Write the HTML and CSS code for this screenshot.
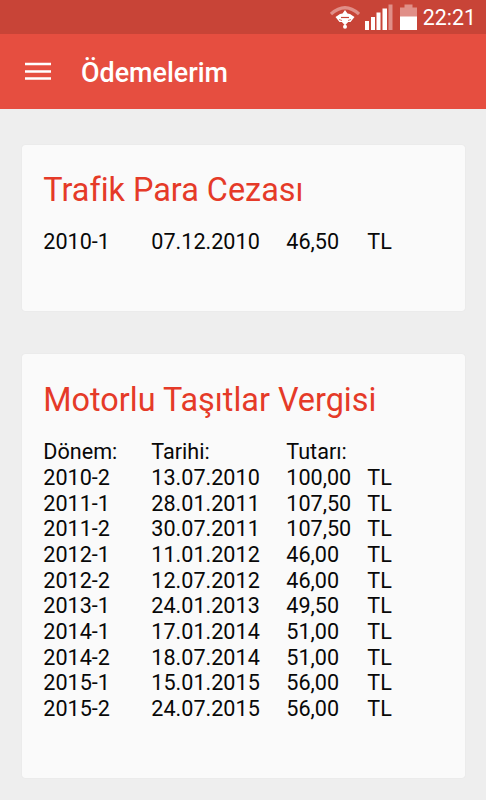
FILE: index.html
```html
<!DOCTYPE html>
<html lang="tr">
<head>
    <meta charset="UTF-8">
    <meta name="viewport" content="width=device-width, initial-scale=1.0">
    <title>Ödemelerim</title>
    <link rel="stylesheet" href="styles.css">
</head>

<body>
    <div class="status-bar">
        <svg class="wifi" width="30" height="24" viewBox="0 0 30 24">
            <path d="M1 8Q15-4.500 29 8" fill="none" stroke="#e08f88" stroke-width="3.200"/>
            <path d="M5.500 11L10 8L12.500 7.500L15 4L17.500 7.500L20 8L24.500 11L20.500 16H9.500Z" fill="#fff"/>
            <path d="M11 11.500H19" stroke="#c84437" stroke-width="1.2"/>
            <path d="M9 13.500L12 14.500M21 13.500L18 14.500" stroke="#d9776d" stroke-width="1"/>
            <path d="M11 15H19L15 19.500Z" fill="#fff"/>
            <circle cx="15" cy="20.800" r="2" fill="#fff"/>
        </svg>
        <svg class="signal" width="28" height="26" viewBox="0 0 28 26">
            <path d="M0 17h4v9H0zM6 13h4v13H6zM11.500 8.500h4V26h-4zM17.500 4.500h4.500V26h-4.500z" fill="#fff"/>
            <path d="M23.500 0.500h4V26h-4z" fill="#e08f88"/>
        </svg>
        <svg class="battery" width="17" height="26" viewBox="0 0 17 26">
            <path d="M4.500 0.500h8v3H17V13H0V3.500h4.500z" fill="#e08f88"/>
            <path d="M0 12.500h17V26H0z" fill="#fff"/>
        </svg>
        <span class="clock">22:21</span>
    </div>

    <div class="toolbar">
        <svg class="menu-icon" width="26" height="20" viewBox="0 0 26 20">
            <path d="M0 2h26M0 9.500h26M0 16.500h26" stroke="#fff" stroke-width="2.600"/>
        </svg>
        <h1>Ödemelerim</h1>
    </div>

    <div class="cards">
        <div class="card">
            <h2>Trafik Para Cezası</h2>
            <div class="payments">
                <span>2010-1</span><span>07.12.2010</span><span>46,50</span><span>TL</span>
            </div>
        </div>

        <div class="card">
            <h2>Motorlu Taşıtlar Vergisi</h2>
            <div class="payments">
                <span>Dönem:</span><span>Tarihi:</span><span>Tutarı:</span><span></span>
                <span>2010-2</span><span>13.07.2010</span><span>100,00</span><span>TL</span>
                <span>2011-1</span><span>28.01.2011</span><span>107,50</span><span>TL</span>
                <span>2011-2</span><span>30.07.2011</span><span>107,50</span><span>TL</span>
                <span>2012-1</span><span>11.01.2012</span><span>46,00</span><span>TL</span>
                <span>2012-2</span><span>12.07.2012</span><span>46,00</span><span>TL</span>
                <span>2013-1</span><span>24.01.2013</span><span>49,50</span><span>TL</span>
                <span>2014-1</span><span>17.01.2014</span><span>51,00</span><span>TL</span>
                <span>2014-2</span><span>18.07.2014</span><span>51,00</span><span>TL</span>
                <span>2015-1</span><span>15.01.2015</span><span>56,00</span><span>TL</span>
                <span>2015-2</span><span>24.07.2015</span><span>56,00</span><span>TL</span>
            </div>
        </div>
    </div>
</body>
</html>
```

FILE: styles.css
```css
body {
    font-family: Roboto, sans-serif;
    background-color: #eeeeee;
    color: #080808;
    margin: 0;
    height: 800px;
    overflow: hidden;
}

.status-bar {
    display: flex;
    justify-content: flex-end;
    align-items: center;
    box-sizing: border-box;
    height: 34px;
    padding-right: 10px;
    background-color: #c84437;
    color: #fff;
}

.wifi {
    margin-top: 2px;
    margin-right: 5px;
}

.signal {
    margin-right: 7px;
}

.battery {
    margin-right: 6px;
}

.clock {
    font-size: 21.4px;
    line-height: 26px;
    padding-top: 2px;
}

.toolbar {
    display: flex;
    align-items: center;
    height: 75px;
    padding-left: 25px;
    background-color: #e64e40;
    color: #fff;
}

.menu-icon {
    margin-right: 30px;
}

h1 {
    margin: 0;
    padding-top: 2px;
    font-size: 26.9px;
    font-weight: 500;
    line-height: 32px;
}

.cards {
    display: flex;
    flex-direction: column;
    gap: 43px;
    padding: 35.5px 21.5px 0;
}

.card {
    padding: 25.5px 21.8px 56.5px;
    background-color: #fafafa;
    border-radius: 3px;
    box-shadow: 0 0 1px rgba(0, 0, 0, 0.12);
}

h2 {
    margin: 0 0 19.3px;
    color: #e53a28;
    font-size: 32.4px;
    font-weight: 400;
    line-height: 40px;
}

.payments {
    display: grid;
    grid-template-columns: 108px 135px 81px auto;
    font-size: 21.6px;
    line-height: 25.66px;
}
```
